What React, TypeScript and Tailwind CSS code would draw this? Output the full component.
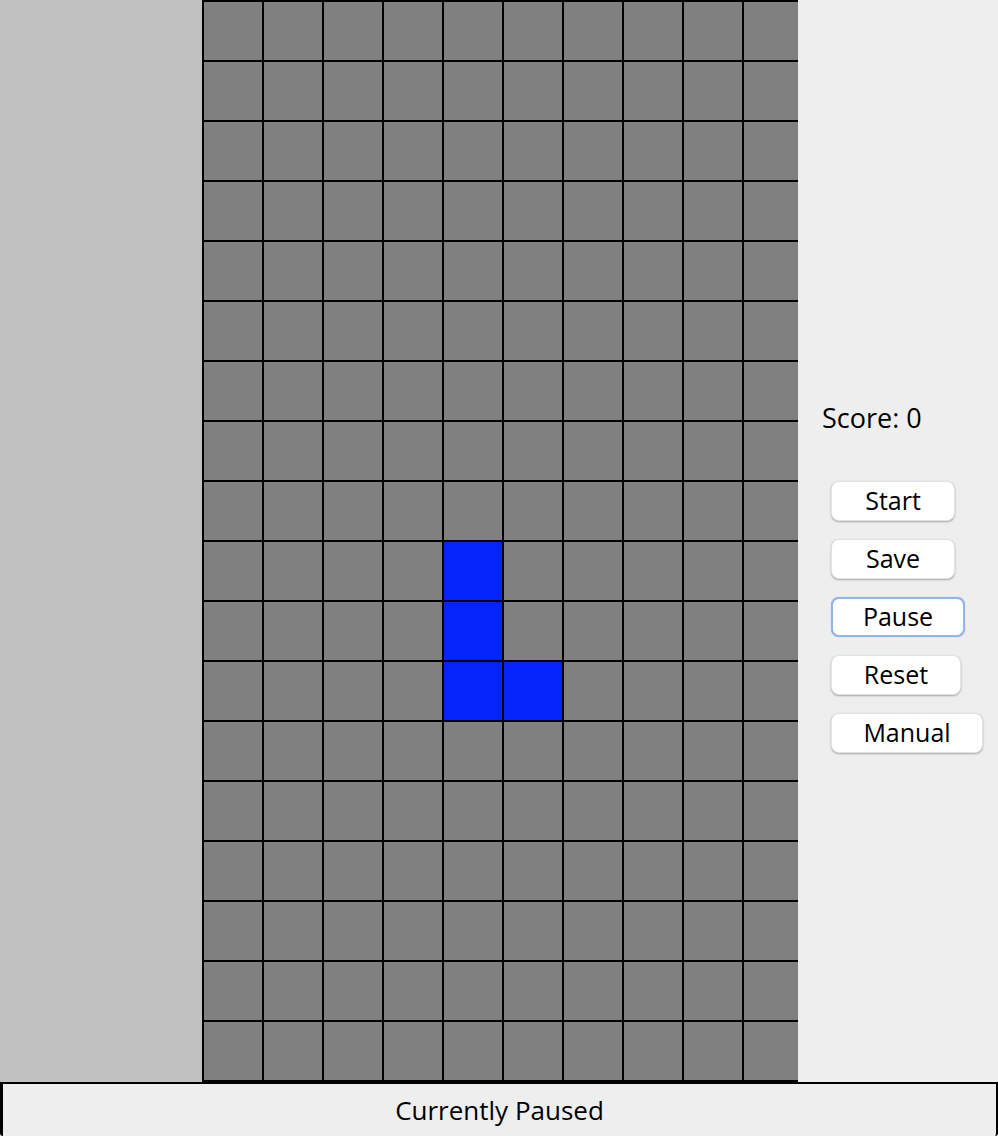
const ROWS = 18;
const COLS = 10;

// cells of the falling piece, as "row-col"
const piece = new Set(["9-4", "10-4", "11-4", "11-5"]);

const buttons = [
  { label: "Start", width: "w-[124px]", focused: false },
  { label: "Save", width: "w-[124px]", focused: false },
  { label: "Pause", width: "w-[134px]", focused: true },
  { label: "Reset", width: "w-[130px]", focused: false },
  { label: "Manual", width: "w-[152px]", focused: false },
];

const Board = () => {
  const cells = [];
  for (let r = 0; r < ROWS; r++) {
    for (let c = 0; c < COLS; c++) {
      const filled = piece.has(`${r}-${c}`);
      cells.push(
        <div
          key={`${r}-${c}`}
          className={filled ? "h-[58px] bg-[#0424fb]" : "h-[58px] bg-[#808080]"}
        />
      );
    }
  }
  return (
    <div className="w-[596px] h-full overflow-hidden bg-black">
      <div className="w-[604px] pt-[2px] pl-[2px] grid grid-cols-[repeat(10,58px)] gap-[2px]">
        {cells}
      </div>
    </div>
  );
};

const SidePanel = () => (
  <div className="flex-1 bg-[#eeeeee] flex flex-col pt-[398px]">
    <div className="pl-[24px] h-[40px] leading-[40px] text-[27px] text-black">Score: 0</div>
    <div className="mt-[43px] pl-[33px] flex flex-col gap-[18px]">
      {buttons.map((b) => (
        <button
          key={b.label}
          className={`${b.width} h-[40px] bg-white rounded-[8px] text-[25px] leading-none text-black flex items-center justify-center pb-[2px] ${
            b.focused
              ? "border-2 border-[#93b4e6] shadow-[0_0_1px_rgba(60,110,200,0.5)]"
              : "border border-[#e2e2e2] shadow-[0_1px_2px_rgba(0,0,0,0.3)]"
          }`}
        >
          {b.label}
        </button>
      ))}
    </div>
  </div>
);

export default function App() {
  return (
    <div
      className="w-[998px] h-[1136px] flex flex-col bg-[#eeeeee]"
      style={{ fontFamily: '"Open Sans", "Noto Sans", sans-serif' }}
    >
      <div className="flex h-[1082px]">
        <div className="w-[202px] bg-[#c0c0c0]" />
        <Board />
        <SidePanel />
      </div>
      <div className="flex-1 border-2 border-l-[3px] border-b-0 border-black bg-[#eeeeee] flex items-center justify-center text-[26px] text-black rounded-bl-[3px] rounded-br-[3px]">
        Currently Paused
      </div>
    </div>
  );
}
